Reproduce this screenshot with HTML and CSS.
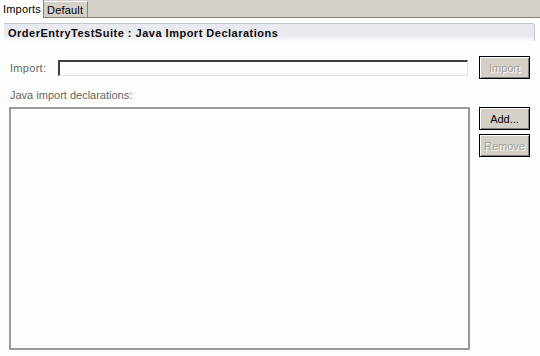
FILE: index.html
```html
<!DOCTYPE html>
<html lang="en">
  <head>
    <meta charset="UTF-8" />
    <title>Java Import Declarations</title>
    <link rel="stylesheet" href="styles.css">
  </head>
  <body>
    <div class="tabs">
      <div class="tab active">Imports</div>
      <div class="tab">Default</div>
    </div>
    <div class="page">
      <div class="header">OrderEntryTestSuite : Java Import Declarations</div>

      <div class="import-row">
        <label for="importName">Import:</label>
        <input type="text" id="importName" />
        <button class="btn" disabled>Import</button>
      </div>

      <div class="decl-label">Java import declarations:</div>

      <div class="list-row">
        <div class="list"></div>
        <div class="side">
          <button class="btn">Add...</button>
          <button class="btn" disabled>Remove</button>
        </div>
      </div>
    </div>
  </body>
</html>
```

FILE: styles.css
```css
body {
  margin: 0;
  background-color: #fcfefb;
  font-family: "Liberation Sans", Arial, sans-serif;
  font-size: 11px;
  color: #000;
  height: 356px;
  overflow: hidden;
}

.tabs {
  display: flex;
  height: 17px;
  background-color: #d4d0c8;
  border-bottom: 1px solid #808080;
}

.tab {
  line-height: 16px;
  padding: 0 3px;
  margin-top: 1px;
  border-right: 1px solid #808080;
  border-top: 1px solid #ffffff;
  box-sizing: border-box;
  height: 17px;
  width: 44px;
  letter-spacing: 0.2px;
}

.tab.active {
  background-color: #fcfefb;
  margin-top: 0;
  height: 18px;
  margin-bottom: -1px;
  border-top: none;
  line-height: 18px;
}

.page {
  padding: 5px 5px 0 4px;
}

.header {
  height: 17px;
  line-height: 18px;
  padding-left: 4px;
  font-weight: bold;
  letter-spacing: 0.5px;
  color: #0a0a0a;
  border-top: 1px solid #c4c7cc;
  border-right: 1px solid #c4c7cc;
  border-top-right-radius: 3px;
  background: linear-gradient(#e9eaf0 0, #e9eaf0 12px, #fcfefb 18px);
}

.import-row {
  display: flex;
  align-items: center;
  margin-top: 15px;
  padding-left: 6px;
  height: 23px;
}

.import-row label {
  width: 48px;
  color: #666666;
  letter-spacing: 0.3px;
}

.import-row input {
  width: 410px;
  height: 16px;
  box-sizing: border-box;
  margin: 0;
  padding: 0;
  border: 1px solid;
  border-color: #404040 #e0e0e0 #e0e0e0 #404040;
  border-top-width: 2px;
  border-left-width: 2px;
  background-color: #fcfefb;
}

.btn {
  width: 51px;
  height: 23px;
  margin: 0 0 0 11px;
  padding: 0;
  font-family: "Liberation Sans", Arial, sans-serif;
  font-size: 11px;
  color: #000;
  background-color: #d4d0c8;
  border: 1px solid #000;
  box-shadow: inset 1px 1px 0 #ffffff, inset -1px -1px 0 #808080;
}

.btn:disabled {
  color: #a19f9a;
  text-shadow: 1px 1px 0 #ffffff;
}

.decl-label {
  color: #666666;
  margin-top: 10px;
  padding-left: 6px;
  height: 18px;
}

.list-row {
  display: flex;
  padding-left: 5px;
}

.list {
  width: 461px;
  height: 243px;
  box-sizing: border-box;
  border: 2px solid #9a9a9a;
  background-color: #fcfefb;
}

.side {
  display: flex;
  flex-direction: column;
  gap: 4px;
  margin-left: 9px;
}

.side .btn {
  margin-left: 0;
}
```
